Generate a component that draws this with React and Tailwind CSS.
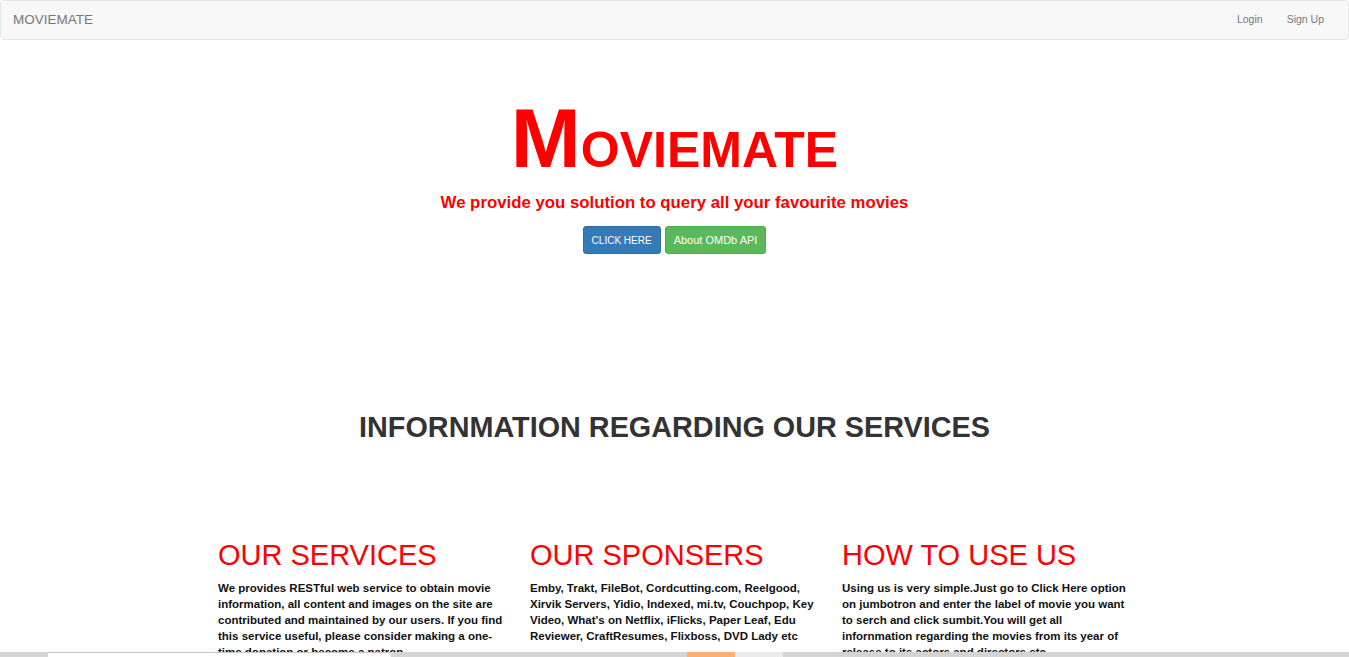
const font = { fontFamily: '"Liberation Sans", Arial, sans-serif' };

const columns = [
  {
    title: "OUR SERVICES",
    body:
      "We provides RESTful web service to obtain movie information, all content and images on the site are contributed and maintained by our users. If you find this service useful, please consider making a one-time donation or become a patron.",
  },
  {
    title: "OUR SPONSERS",
    body:
      "Emby, Trakt, FileBot, Cordcutting.com, Reelgood, Xirvik Servers, Yidio, Indexed, mi.tv, Couchpop, Key Video, What's on Netflix, iFlicks, Paper Leaf, Edu Reviewer, CraftResumes, Flixboss, DVD Lady etc",
  },
  {
    title: "HOW TO USE US",
    body:
      "Using us is very simple.Just go to Click Here option on jumbotron and enter the label of movie you want to serch and click sumbit.You will get all infornmation regarding the movies from its year of release to its actors and directors etc.",
  },
];

export default function App() {
  return (
    <div className="min-h-screen bg-white font-['Liberation_Sans',Arial,sans-serif]" style={font}>
      {/* navbar */}
      <nav className="h-10 bg-[#f8f8f8] border border-[#e7e7e7] rounded-[4px] flex items-center justify-between pl-3 pr-6">
        <span className="text-[13.5px] text-[#777]">MOVIEMATE</span>
        <div className="flex items-center gap-6 text-[10.5px] text-[#777]">
          <span>Login</span>
          <span>Sign Up</span>
        </div>
      </nav>

      {/* jumbotron */}
      <section className="flex flex-col items-center pt-[56px]">
        <h1 className="font-bold text-[#ff0000] leading-none">
          <span className="text-[84px]">M</span>
          <span className="text-[50px]">OVIEMATE</span>
        </h1>
        <p className="mt-[10px] text-[16.8px] font-bold text-[#ff0000]">
          We provide you solution to query all your favourite movies
        </p>
        <div className="mt-[11px] flex gap-1">
          <button className="h-[28px] px-[8px] text-[10px] text-white bg-[#337ab7] border border-[#2e6da4] rounded-[3px]">
            CLICK HERE
          </button>
          <button className="h-[28px] px-[8px] text-[11px] text-white bg-[#5cb85c] border border-[#4cae4c] rounded-[3px]">
            About OMDb API
          </button>
        </div>
      </section>

      <h2 className="mt-[152px] text-center text-[28.8px] font-bold text-[#333]">
        INFORNMATION REGARDING OUR SERVICES
      </h2>

      {/* info columns */}
      <div className="mt-[92px] ml-[218px] flex">
        {columns.map((c) => (
          <div key={c.title} className="w-[312px]">
            <h3 className="text-[29px] text-[#ff0000] leading-none">{c.title}</h3>
            <p className="mt-[10px] w-[292px] text-[11.5px] font-bold leading-[16px] text-[#111]">{c.body}</p>
          </div>
        ))}
      </div>

      {/* strip peeking at the bottom edge */}
      <div className="fixed bottom-0 left-0 right-0 h-[5px] bg-[#d4d4d4] flex">
        <div className="ml-[48px] w-[343px] bg-white border-t border-[#c8c8c8]" />
        <div className="ml-[296px] w-[48px] bg-[#f7b27a]" />
        <div className="w-[48px] bg-[#ececec]" />
      </div>
    </div>
  );
}
